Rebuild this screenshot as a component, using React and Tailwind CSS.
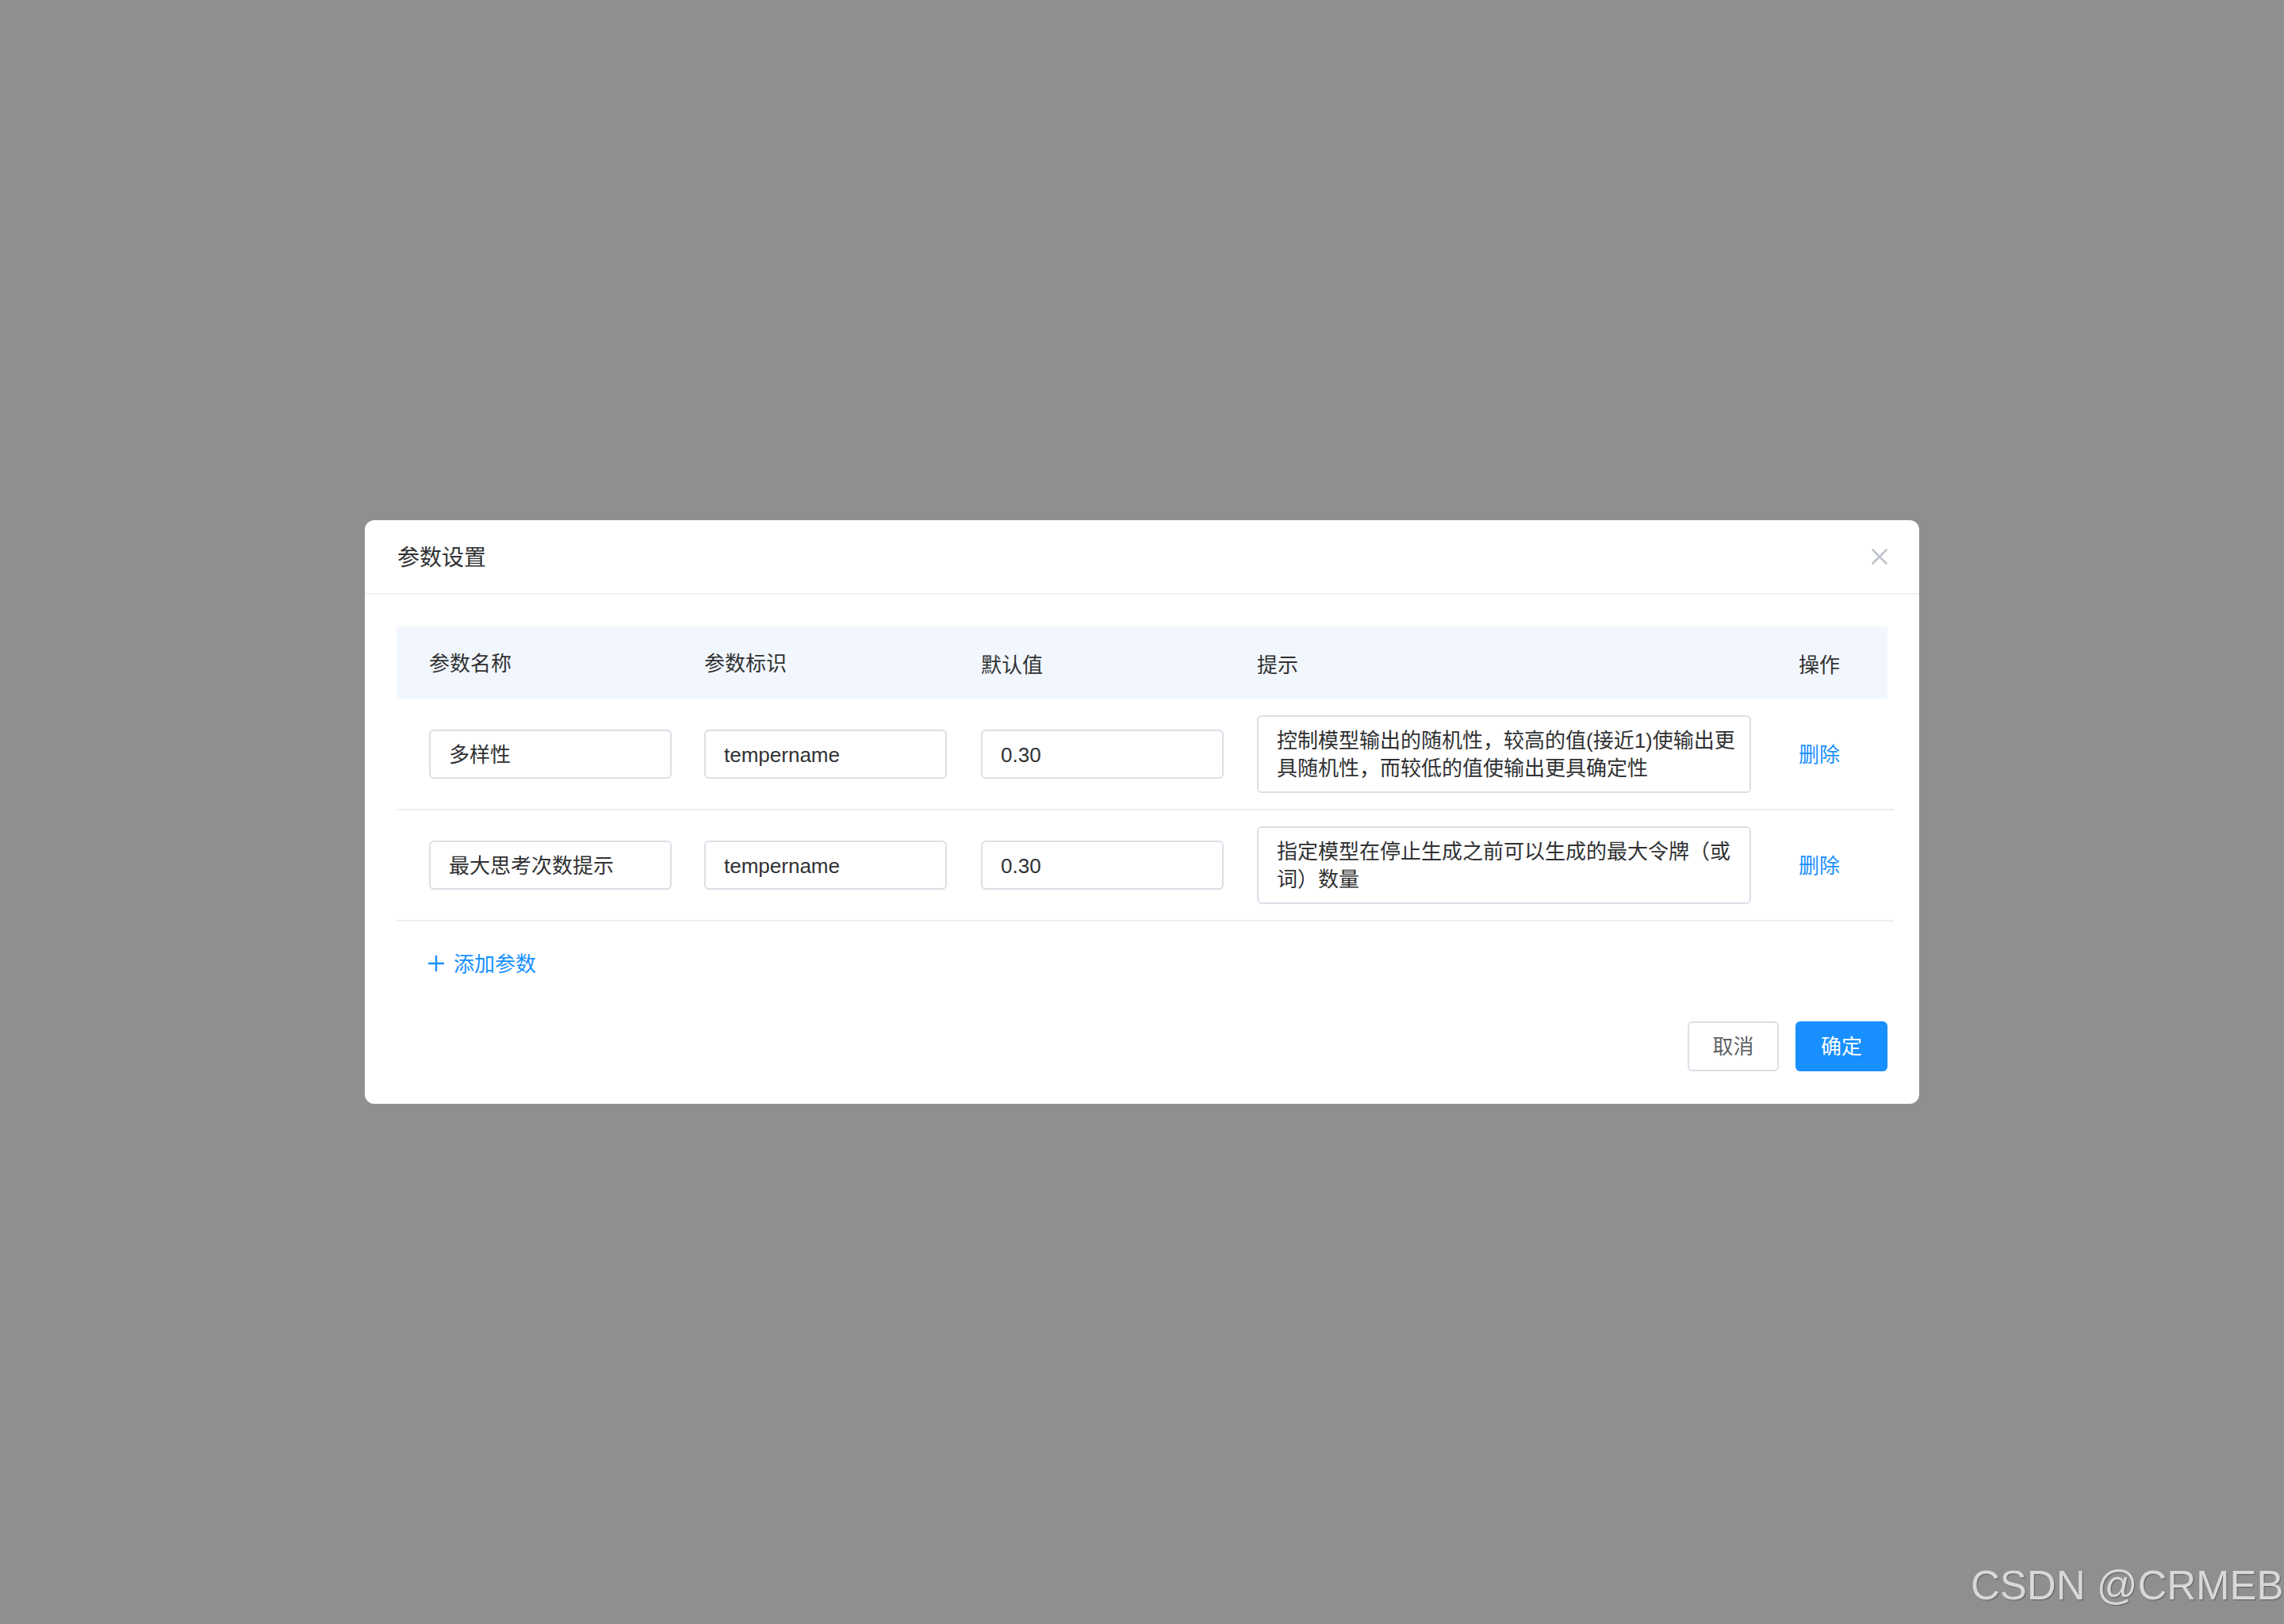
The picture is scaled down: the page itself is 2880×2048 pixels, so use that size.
import React from "react";

const font = { fontFamily: '"Liberation Sans", "Noto Sans CJK SC", sans-serif' };

function Field({ children }) {
  return (
    <div className="w-[306px] h-[62px] border-2 border-[#dcdfe6] rounded-[6px] bg-white flex items-center pl-[23px] pt-[2px] text-[26px] text-[#303133] whitespace-nowrap">
      {children}
    </div>
  );
}

function Hint({ lines }) {
  return (
    <div className="w-[623px] h-[98px] border-2 border-[#dcdfe6] rounded-[6px] bg-white flex flex-col justify-center pl-[23px] pt-[2px] text-[26px] leading-[35px] text-[#303133]">
      {lines.map((l, i) => (
        <span key={i} className="block whitespace-nowrap">{l}</span>
      ))}
    </div>
  );
}

function Row({ name, hint }) {
  return (
    <div className="flex items-center h-[140px] border-b-2 border-[#ebeef5]">
      <div className="w-[347px] pl-[41px]"><Field>{name}</Field></div>
      <div className="w-[349px] pl-[41px]"><Field>tempername</Field></div>
      <div className="w-[348px] pl-[41px]"><Field>0.30</Field></div>
      <div className="w-[684px] pl-[41px]"><Hint lines={hint} /></div>
      <div className="w-[160px] pl-[40px] pt-[2px] text-[26px] text-[#1890ff]">删除</div>
    </div>
  );
}

export default function App() {
  return (
    <div className="relative w-[2880px] h-[2048px] bg-[#8e8f91] overflow-hidden flex items-start" style={font}>
      <div className="ml-[460px] mt-[656px] w-[1960px] bg-white rounded-[12px] flex flex-col">
        <div className="h-[94px] flex items-center justify-between pl-[41px] pr-[40px] border-b-2 border-[#eef1f6]">
          <span className="text-[28px] text-[#303133] pt-[4px]">参数设置</span>
          <svg width="20" height="20" viewBox="0 0 20 20" className="block">
            <path d="M1.5 1.5 L18.5 18.5 M18.5 1.5 L1.5 18.5" stroke="#c0c4cc" strokeWidth="2.6" strokeLinecap="round" />
          </svg>
        </div>
        <div className="pt-[40px] px-[40px] pb-[41px] flex flex-col">
          <div className="w-[1888px] flex flex-col">
            <div className="w-[1880px] h-[92px] bg-[#f2f7fd] flex items-center text-[26px] text-[#303133]">
              <div className="w-[347px] pl-[41px] pt-[2px]">参数名称</div>
              <div className="w-[349px] pl-[41px] pt-[2px]">参数标识</div>
              <div className="w-[348px] pl-[41px] pt-[6px]">默认值</div>
              <div className="w-[684px] pl-[41px] pt-[6px]">提示</div>
              <div className="w-[152px] pl-[40px] pt-[6px]">操作</div>
            </div>
            <Row
              name="多样性"
              hint={["控制模型输出的随机性，较高的值(接近1)使输出更", "具随机性，而较低的值使输出更具确定性"]}
            />
            <Row
              name="最大思考次数提示"
              hint={["指定模型在停止生成之前可以生成的最大令牌（或", "词）数量"]}
            />
          </div>
          <div className="h-[106px] flex items-center pl-[39px] gap-[11px] text-[26px] text-[#1890ff]">
            <svg width="22" height="22" viewBox="0 0 22 22" className="block">
              <path d="M11 1 V21 M1 11 H21" stroke="#1890ff" strokeWidth="2.4" />
            </svg>
            <span className="pt-[2px]">添加参数</span>
          </div>
          <div className="mt-[20px] flex justify-end gap-[21px]">
            <button className="w-[115px] h-[63px] border-2 border-[#dcdfe6] rounded-[6px] bg-white text-[26px] text-[#606266] flex items-center justify-center pt-[2px]">
              取消
            </button>
            <button className="w-[116px] h-[63px] rounded-[6px] bg-[#1890ff] text-[26px] text-white flex items-center justify-center pt-[2px]">
              确定
            </button>
          </div>
        </div>
      </div>
      <div
        className="absolute left-[2485px] top-[1974px] text-[51px] leading-none text-[#d8d8d8] whitespace-nowrap [text-shadow:1px_1px_1px_rgba(0,0,0,0.35)]"
        style={{ fontFamily: '"Liberation Sans", sans-serif' }}
      >
        CSDN @CRMEB
      </div>
    </div>
  );
}
